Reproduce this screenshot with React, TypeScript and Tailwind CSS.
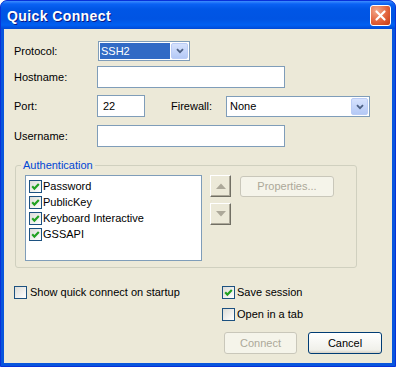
import React from 'react';

// XP-style checkbox (13x13)
const Check = ({ on }: { on?: boolean }) => (
  <span className="w-[13px] h-[13px] shrink-0 border border-[#1C5180] bg-[linear-gradient(135deg,#DCDCD7,#FFFFFF)] flex items-center justify-center">
    {on && (
      <svg width="11" height="11" viewBox="0 0 11 11">
        <path d="M2.2 5.2 L4.4 7.6 L8.8 3" fill="none" stroke="#21A121" strokeWidth="2.1" />
      </svg>
    )}
  </span>
);

const ComboArrow = () => (
  <span className="w-[17px] self-stretch my-[1px] mr-[1px] rounded-[2px] border border-[#BACCF6] bg-[linear-gradient(to_bottom,#D6E2FD,#B4C9F6)] flex items-center justify-center">
    <svg width="8" height="6" viewBox="0 0 8 6">
      <path d="M1 1.2 L4 4.2 L7 1.2" fill="none" stroke="#4D6185" strokeWidth="1.8" />
    </svg>
  </span>
);

const Arrow = ({ up }: { up?: boolean }) => (
  <span className="w-[21px] h-[22px] border border-t-white border-l-white border-r-[#716F64] border-b-[#716F64] shadow-[inset_-1px_-1px_0_#ACA899] bg-[#ECE9D8] flex items-center justify-center">
    <svg width="10" height="6" viewBox="0 0 10 6">
      <path d={up ? 'M0 6 L5 0.5 L10 6 Z' : 'M0 0 L5 5.5 L10 0 Z'} fill="#ACA899" />
    </svg>
  </span>
);

const App: React.FC = () => {
  const methods = ['Password', 'PublicKey', 'Keyboard Interactive', 'GSSAPI'];

  return (
    <div className="w-[396px] h-[367px] flex flex-col bg-[#0855DD] border border-[#0831D9] rounded-t-[7px] overflow-hidden font-['Liberation_Sans',Arial,sans-serif] text-[11px] text-black select-none">
      {/* Title bar */}
      <div className="h-[28px] shrink-0 flex items-center justify-between pl-[6px] pr-[4px] bg-[linear-gradient(to_bottom,#3D8DFF_0px,#0A62F4_3px,#0056E6_8px,#0054E3_18px,#0060F2_24px,#004AD6_28px)]">
        <span className="mt-[2px] text-white font-bold text-[14px] tracking-[0.4px] leading-none [text-shadow:1px_1px_0_#0A1883]">Quick Connect</span>
        <span className="w-[21px] h-[21px] mt-[1px] rounded-[3px] border border-white bg-[radial-gradient(circle_at_30%_25%,#F3A88B,#E2633C_55%,#C43A12)] flex items-center justify-center">
          <svg width="13" height="13" viewBox="0 0 13 13">
            <path d="M2.5 2.5 L10.5 10.5 M10.5 2.5 L2.5 10.5" stroke="white" strokeWidth="2.2" strokeLinecap="round" />
          </svg>
        </span>
      </div>

      {/* Client area */}
      <div className="flex-1 mx-[3px] mb-[3px] bg-[#ECE9D8] pl-[9px] pt-[12px] flex flex-col">
        <div className="flex items-center h-[20px]">
          <span className="w-[85px] pl-[1px]">Protocol:</span>
          <div className="w-[92px] h-[20px] border border-[#7F9DB9] bg-white flex">
            <span className="flex-1 m-[1px] bg-[#316AC5] text-white pl-[1px] flex items-center">SSH2</span>
            <ComboArrow />
          </div>
        </div>

        <div className="flex items-center h-[22px] mt-[5px]">
          <span className="w-[84px] pl-[1px]">Hostname:</span>
          <div className="w-[188px] h-[22px] border border-[#7F9DB9] bg-white" />
        </div>

        <div className="flex items-center h-[22px] mt-[7px]">
          <span className="w-[84px] pl-[1px]">Port:</span>
          <div className="w-[48px] h-[22px] border border-[#7F9DB9] bg-white pl-[5px] flex items-center">22</div>
          <span className="ml-[26px] w-[55px]">Firewall:</span>
          <div className="w-[144px] h-[21px] self-end border border-[#7F9DB9] bg-white flex">
            <span className="flex-1 pl-[3px] flex items-center">None</span>
            <ComboArrow />
          </div>
        </div>

        <div className="flex items-center h-[22px] mt-[8px]">
          <span className="w-[84px] pl-[1px]">Username:</span>
          <div className="w-[188px] h-[22px] border border-[#7F9DB9] bg-white" />
        </div>

        {/* Authentication group */}
        <div className="relative mt-[18px] ml-[2px] w-[342px] border border-[#D0D0BF] rounded-[3px] pt-[9px] pl-[9px] pb-[6px] flex items-start">
          <span className="absolute -top-[7px] left-[5px] px-[2px] bg-[#ECE9D8] text-[#0046D5] leading-[13px]">Authentication</span>
          <div className="w-[177px] h-[86px] border border-[#7F9DB9] bg-white pt-[2px] pl-[3px] flex flex-col">
            {methods.map((m) => (
              <div key={m} className="h-[16px] flex items-center gap-[1px]">
                <Check on />
                <span>{m}</span>
              </div>
            ))}
          </div>
          <div className="ml-[8px] flex flex-col gap-[6px]">
            <Arrow up />
            <Arrow />
          </div>
          <span className="ml-[9px] mt-[1px] w-[94px] h-[21px] rounded-[3px] border border-[#C9C7BA] bg-[#F5F4EA] text-[#ACA899] flex items-center justify-center">
            Properties...
          </span>
        </div>

        {/* Options */}
        <div className="mt-[18px] flex items-start">
          <div className="w-[209px] pl-[1px] flex items-center gap-[3px] h-[13px]">
            <Check />
            <span>Show quick connect on startup</span>
          </div>
          <div className="flex flex-col gap-[9px]">
            <div className="flex items-center gap-[2px] h-[13px]">
              <Check on />
              <span>Save session</span>
            </div>
            <div className="flex items-center gap-[2px] h-[13px]">
              <Check />
              <span>Open in a tab</span>
            </div>
          </div>
        </div>

        <div className="mt-[11px] pr-[10px] flex justify-end gap-[11px]">
          <span className="w-[73px] h-[22px] rounded-[3px] border border-[#C9C7BA] bg-[#F5F4EA] text-[#ACA899] flex items-center justify-center">
            Connect
          </span>
          <span className="w-[74px] h-[22px] rounded-[3px] border border-[#003C74] bg-[linear-gradient(to_bottom,#FFFFFF,#F0F0EA_85%,#D6D0C5)] flex items-center justify-center">
            Cancel
          </span>
        </div>
      </div>
    </div>
  );
};

export default App;
